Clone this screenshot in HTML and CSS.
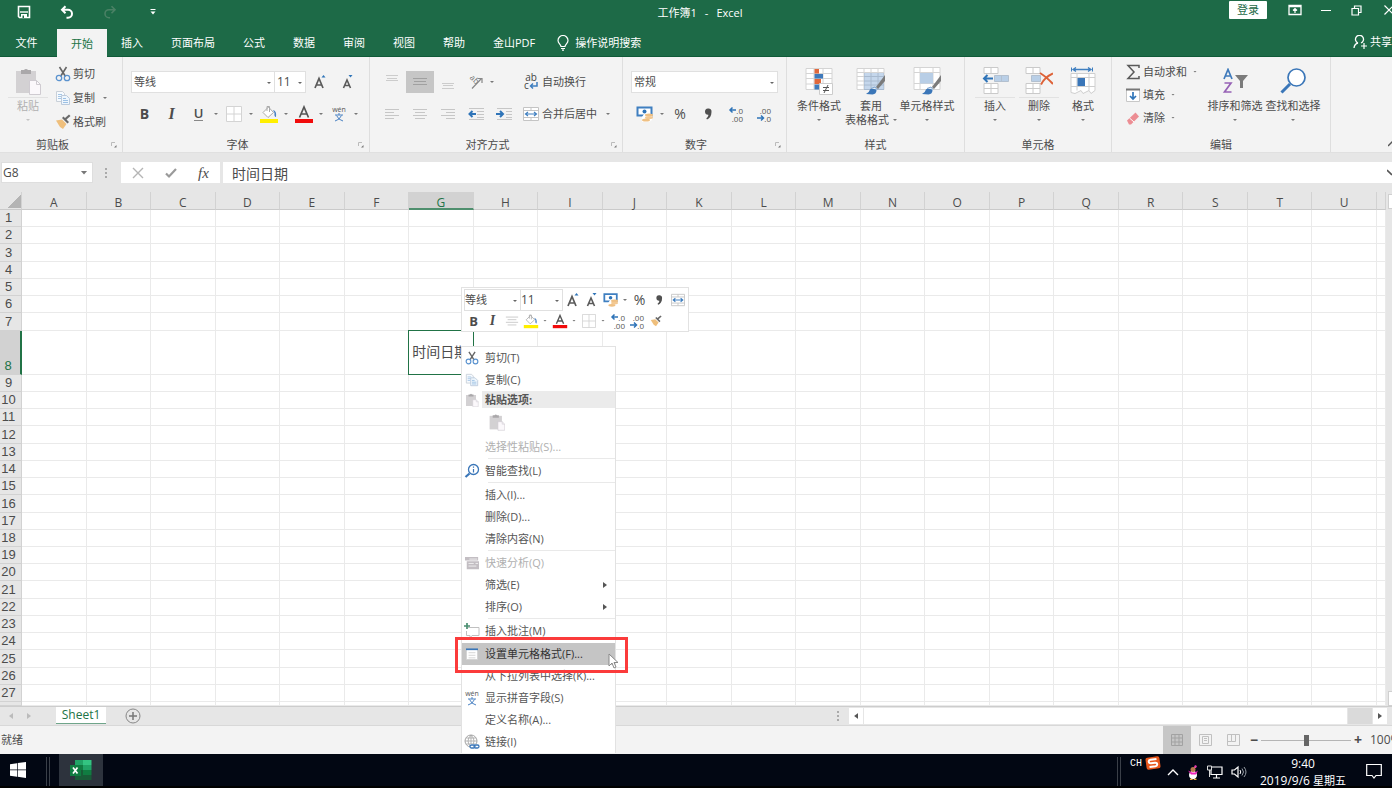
FILE: index.html
```html
<!DOCTYPE html>
<html lang="zh-CN">
<head>
<meta charset="utf-8">
<title>工作簿1 - Excel</title>
<link rel="stylesheet" href="styles.css">
</head>
<body>
<svg class="sprite" aria-hidden="true">
  <symbol id="i-save" viewBox="0 0 14 14"><path d="M1.500 1.500h11v11h-10l-1-1z" fill="none" stroke="#fff" stroke-width="1.600"/><path d="M3 7h8" stroke="#fff" stroke-width="1.400"/><path d="M4 9h6v4H4z" fill="#fff"/><path d="M5.500 10.500h1.500V13H5.500z" fill="#1d6a47"/></symbol>
  <symbol id="i-undo" viewBox="0 0 14 14"><path d="M5.500 1.200L2 4.700l3.500 3.500M2.400 4.700H8a4 4 0 0 1 0 8H6.500" fill="none" stroke="#fff" stroke-width="2"/></symbol>
  <symbol id="i-redo" viewBox="0 0 14 14"><path d="M8.500 1.200L12 4.700 8.500 8.200M11.600 4.700H6a4 4 0 0 0 0 8h1" fill="none" stroke="#4a8165" stroke-width="1.600"/></symbol>
  <symbol id="i-qat" viewBox="0 0 8 8"><path d="M1.500 1.500h5" stroke="#fff"/><path d="M1.500 3.500h5L4 6.500z" fill="#fff"/></symbol>
  <symbol id="i-ribbonopt" viewBox="0 0 14 12"><path d="M1 1.500h12v9H1zM1 2.500h12" fill="none" stroke="#fff" stroke-width="1.300"/><path d="M7 9V5M5 6.500l2-2 2 2" fill="none" stroke="#fff" stroke-width="1.200"/></symbol>
  <symbol id="i-restore" viewBox="0 0 11 11"><path d="M1 3.500h6.500V10H1zM3.500 3V1H10v6.500H8" fill="none" stroke="#fff" stroke-width="1.200"/></symbol>
  <symbol id="i-close" viewBox="0 0 8 10"><path d="M.5.500l9 9M9.500.500l-9 9" stroke="#fff" stroke-width="1.200"/></symbol>
  <symbol id="i-bulb" viewBox="0 0 12 16"><path d="M4 11.500C4 9.500 1 8.500 1 5.500a5 5 0 0 1 10 0C11 8.500 8 9.500 8 11.500zM4 13.500h4M5 15.200h2" fill="none" stroke="#fff" stroke-width="1.200"/></symbol>
  <symbol id="i-share" viewBox="0 0 14 14"><path d="M1 13c.3-3 2-4.500 4-5M8 8a4 4 0 1 0-3 0" fill="none" stroke="#fff" stroke-width="1.300"/><path d="M8 11h6M11 8v6" stroke="#fff" stroke-width="1.200"/></symbol>

  <symbol id="i-paste" viewBox="0 0 26 28"><path d="M1 4h20v22H1z" fill="#d3d1d3"/><path d="M6 3h3a2.500 2.500 0 0 1 4 0h3v4H6z" fill="#aaa8aa"/><path d="M14.500 13.500h7l4 4v10h-11z" fill="#fbf8fb" stroke="#cfcbd1"/><path d="M21.500 13.500v4h4" fill="none" stroke="#cfcbd1"/></symbol>
  <symbol id="i-cut" viewBox="0 0 16 16"><path d="M4.500 1l6 9.500M11.500 1l-6 9.500" stroke="#666" stroke-width="1.600"/><circle cx="4" cy="12" r="2.700" fill="none" stroke="#5b93cf" stroke-width="1.300"/><circle cx="12" cy="12" r="2.700" fill="none" stroke="#5b93cf" stroke-width="1.300"/></symbol>
  <symbol id="i-copy" viewBox="0 0 16 16"><path d="M1.500 1.500h6l2 2v8h-8z" fill="#f6fafe" stroke="#c9d0d8"/><path d="M3 4.500h4M3 6.500h5M3 8.500h3" stroke="#a5c6e6"/><path d="M6.500 5.500h5l3 3v6h-8z" fill="#eef6fd" stroke="#bccadb"/><path d="M8 8.500h3M8 10.500h5M8 12.500h5" stroke="#9cc0e4"/></symbol>
  <symbol id="i-brush" viewBox="0 0 16 16"><path d="M1 6.500l6-1 4.500 4.500L8 15 5 13z" fill="#efbf7c"/><path d="M7 4l5.500 5.500 1.500-1.500-2.500-2.500L15.500 2 14 .5 10 4 8.500 2.500z" fill="#6a6a6a"/></symbol>
  <symbol id="i-border" viewBox="0 0 16 16"><path d="M.5.500h15v15H.5zM8 .5v15M.5 8h15" fill="#fff" stroke="#d4d4d4"/></symbol>
  <symbol id="i-fill" viewBox="0 0 20 18"><path d="M4 7.500L9.500 2l5 5.500L9 12.500z" fill="#fff" stroke="#aaa"/><path d="M8 6V1.500h2.500V7" fill="none" stroke="#aaa"/><path d="M14 5q4 1 3 7-2 0-1.500-4z" fill="#4a82c3"/><path d="M1 14h18v4H1z" fill="#ffef00"/></symbol>
  <symbol id="i-fcolor" viewBox="0 0 20 18"><path d="M5.500 12.500L10 2l4.500 10.500M7 9h6" fill="none" stroke="#555" stroke-width="1.700"/><path d="M1 14h18v4H1z" fill="#f10b0b"/></symbol>
  <symbol id="i-wen" viewBox="0 0 16 16"><text x="8" y="6" class="g-wen">wén</text><path d="M4 9h8M8 7v2M5.500 9.500Q7.500 14 12 15M10.500 9.500Q8.500 14 4 15" stroke="#4a82c3" fill="none"/></symbol>
  <symbol id="i-grow" viewBox="0 0 16 16"><path d="M3 14L7 4.500 11 14M4.500 11h5" fill="none" stroke="#5a5a5a" stroke-width="1.700"/><path d="M9.500 3.500h4L11.500 1z" fill="#2f74b8"/></symbol>
  <symbol id="i-shrink" viewBox="0 0 16 16"><path d="M3.500 14L7 6l3.500 8M5 11.500h4" fill="none" stroke="#5a5a5a" stroke-width="1.600"/><path d="M8.500 1h4l-2 2.500z" fill="#2f74b8"/></symbol>
  <symbol id="i-top" viewBox="0 0 16 16"><path d="M2 1.500h12M3 4.500h10M2 6.500h12" stroke="#ccc"/></symbol>
  <symbol id="i-mid" viewBox="0 0 16 16"><path d="M1 4.500h14M2 7.500h12M1 10.500h14" stroke="#a0a0a0"/></symbol>
  <symbol id="i-bot" viewBox="0 0 16 16"><path d="M2 9.500h12M3 11.500h10M2 14.500h12" stroke="#ccc"/></symbol>
  <symbol id="i-left" viewBox="0 0 16 16"><path d="M1 3.500h14M1 6.500h9M1 9.500h14M1 12.500h9" stroke="#c6c6c6"/></symbol>
  <symbol id="i-center" viewBox="0 0 16 16"><path d="M1 3.500h14M3 6.500h10M1 9.500h14M3 12.500h10" stroke="#c6c6c6"/></symbol>
  <symbol id="i-right" viewBox="0 0 16 16"><path d="M1 3.500h14M6 6.500h9M1 9.500h14M6 12.500h9" stroke="#c6c6c6"/></symbol>
  <symbol id="i-outdent" viewBox="0 0 16 16"><path d="M1 2.500h15M9 5.500h7M9 8.500h7M9 11.500h7M1 13.500h15" stroke="#c6c6c6"/><path d="M8 8H2M4.500 5L1.500 8l3 3" fill="none" stroke="#2f74b8" stroke-width="2"/></symbol>
  <symbol id="i-indent" viewBox="0 0 16 16"><path d="M1 2.500h15M10 5.500h6M10 8.500h6M10 11.500h6M1 13.500h15" stroke="#c6c6c6"/><path d="M0 8h6M4 5l3 3-3 3" fill="none" stroke="#2f74b8" stroke-width="2"/></symbol>
  <symbol id="i-orient" viewBox="0 0 16 16"><path d="M4 14.500L13 5M9.500 4.500H14V9" fill="none" stroke="#888" stroke-width="1.200"/><g transform="rotate(45 6 6)"><text x="6" y="8" class="g-ab">ab</text></g></symbol>
  <symbol id="i-wrap" viewBox="0 0 16 18"><text x="8" y="8" class="g-wrap">ab</text><text x="3.500" y="16" class="g-wrap">c</text><path d="M14 9v4H8M10 10.500L7.500 13l2.500 2.500" fill="none" stroke="#3f7fc0" stroke-width="1.500"/></symbol>
  <symbol id="i-merge" viewBox="0 0 16 16"><path d="M.5 1.500h15v13H.5zM.5 4.500h15M.5 11.500h15M8 1.500v3M8 11.500v3" fill="#fff" stroke="#c4c4c4"/><path d="M2.500 8h11M5 6L2.500 8 5 10M11 6l2.500 2L11 10" fill="none" stroke="#3f7fc0" stroke-width="1.200"/></symbol>
  <symbol id="i-money" viewBox="0 0 18 16"><path d="M1.500 1.500h14v8h-14z" fill="#fff" stroke="#3f7fc0" stroke-width="2"/><circle cx="8.500" cy="5.500" r="2" fill="#2f74b8"/><path d="M8 8h8v6l-3 2H6v-5z" fill="#fff"/><ellipse cx="13" cy="9" rx="4" ry="1.500" fill="#efc083"/><ellipse cx="13" cy="11.500" rx="4" ry="1.500" fill="#f3c993"/><ellipse cx="10" cy="14" rx="4" ry="1.600" fill="#efc083"/></symbol>
  <symbol id="i-comma" viewBox="0 0 16 16"><path d="M8 2.500a3 3 0 0 1 3.500 3.500c0 4-2 6.500-4.500 7.500l-.7-1.200c1.500-1 2.200-2.300 2-3.500A3.100 3.100 0 0 1 8 2.500z" fill="#505050"/></symbol>
  <symbol id="i-decinc" viewBox="0 0 16 16"><text x="15" y="7.500" class="g-dec">.0</text><text x="15" y="15.500" class="g-dec">.00</text><path d="M8 4H2M4.500 1.500L2 4l2.500 2.500" fill="none" stroke="#2f74b8" stroke-width="1.500"/></symbol>
  <symbol id="i-decdec" viewBox="0 0 16 16"><text x="15" y="7.500" class="g-dec">.00</text><text x="15" y="15.500" class="g-dec">.0</text><path d="M1 12h6M5 9.500L7.500 12 5 14.500" fill="none" stroke="#2f74b8" stroke-width="1.500"/></symbol>
  <symbol id="i-cond" viewBox="0 0 28 28"><path d="M1 1.500h26v21H1zM1 6.500h26M1 11.500h26M1 17h26M9 1.500v21M18 1.500v21" fill="#fff" stroke="#d4d4d4"/><path d="M9.500 2H14v4.500H9.500zM9.500 12H16v5H9.500z" fill="#e0683c"/><path d="M9.500 7H18v4.500H9.500zM9.500 17.500H14v5H9.500z" fill="#3f7abb"/><path d="M14.500 16.500h13v11h-13z" fill="#fff" stroke="#ccc"/><path d="M18 20.500h6M18 23.500h6M23 18l-4 8" stroke="#555"/></symbol>
  <symbol id="i-tstyle" viewBox="0 0 30 28"><path d="M1 1.500h27v21H1zM1 5.500h27M1 9.500h27M1 14h27M1 18h27M8 1.500v21M15 1.500v21M22 1.500v21" fill="#fff" stroke="#d4d4d4"/><path d="M8 6h20v17H8z" fill="#4a82c3" opacity=".32"/><path d="M20 20L29 8v6l-7 8z" fill="#7b7b7b"/><path d="M10 27q3-1 4-4.500 4-3 6.500.500 0 4-4 4.500z" fill="#3a76b8"/><path d="M15 21.500l4-1.500 2 2.500" fill="#e7eef6" stroke="#7fa5cf"/></symbol>
  <symbol id="i-cstyle" viewBox="0 0 30 28"><path d="M2 .5h26v22H2zM2 5.500h26M2 16.500h26M8 .5v22M21 .5v22" fill="#fff" stroke="#d4d4d4"/><path d="M8 6h13v10.500H8z" fill="#b8cee6"/><path d="M20 20L29 8v6l-7 8z" fill="#7b7b7b"/><path d="M10 27q3-1 4-4.500 4-3 6.500.500 0 4-4 4.500z" fill="#3a76b8"/><path d="M15 21.500l4-1.500 2 2.500" fill="#e7eef6" stroke="#7fa5cf"/></symbol>
  <symbol id="i-insert" viewBox="0 0 28 28"><path d="M3 .5h14v6H3zM10 .5v6M3 16.500h14v10H3zM3 21.500h14M10 16.500v10" fill="#fff" stroke="#cacaca"/><path d="M13.500 8.500h14v6h-14zM20.500 8.500v6" fill="#b9cfe7" stroke="#b3c0cf"/><path d="M12 11.500H3M6.500 8L3 11.500 6.500 15" fill="none" stroke="#2f74b8" stroke-width="2"/></symbol>
  <symbol id="i-delete" viewBox="0 0 28 28"><path d="M1 .5h14v6H1zM8 .5v6M1 16.500h14v10H1zM1 21.500h14M8 16.500v10" fill="#fff" stroke="#cacaca"/><path d="M6.500 8.500h9v6h-9z" fill="#b9cfe7" stroke="#b3c0cf"/><path d="M15 6q6 3.500 13 11M28 6.500Q20 10 16 17.500" fill="none" stroke="#dd6238" stroke-width="2"/></symbol>
  <symbol id="i-format" viewBox="0 0 26 28"><path d="M3 2.500h18M6 .5L3 2.500l3 2M18 .5l3 2-3 2" fill="none" stroke="#3f7fc0" stroke-width="1.300"/><path d="M1.500.5v4M22.500.5v4" stroke="#3f7fc0"/><path d="M1 6.500h24v17l-4 3-2-3-6 3-2-3-6 3-4-1zM1 10.500h24M1 19.500h24M7 6.500v17M19 6.500v17" fill="#fff" stroke="#cfcfcf"/><path d="M7.500 11H15v8H7.500z" fill="#3a76b8"/></symbol>
  <symbol id="i-sum" viewBox="0 0 14 16"><path d="M13 4V1.500H2L8 8l-6 6.500h11V12" fill="none" stroke="#5a5a5a" stroke-width="1.500"/></symbol>
  <symbol id="i-down" viewBox="0 0 14 14"><path d="M.5 1.500h13v12H.5z" fill="#fff" stroke="#c8c8c8"/><path d="M0 1.500h14" stroke="#777" stroke-width="2"/><path d="M7 4v7M4 8l3 3 3-3" fill="none" stroke="#2f74b8" stroke-width="1.700"/></symbol>
  <symbol id="i-erase" viewBox="0 0 14 14"><path d="M1 9.500L9.500 1.500l3.500 4L5 13.500H3z" fill="#ec8d93"/><path d="M3.500 7l4.500 4" stroke="#fff"/></symbol>
  <symbol id="i-sort" viewBox="0 0 26 26"><path d="M2 11L6 1.500 10 11M3.500 8h5" fill="none" stroke="#3f7abb" stroke-width="1.700"/><path d="M2.500 15h6.500L2.500 24H9.500" fill="none" stroke="#9661b5" stroke-width="1.700"/><path d="M13 7h13l-5 6v7h-3v-7z" fill="#7b7b7b"/></symbol>
  <symbol id="i-find" viewBox="0 0 26 26"><path d="M10 16L1.500 24.500" stroke="#3a76b8" stroke-width="3"/><circle cx="16.500" cy="9.500" r="8.500" fill="#fff" stroke="#3a76b8" stroke-width="1.700"/></symbol>
  <symbol id="i-smart" viewBox="0 0 16 16"><path d="M5.500 10.500L1.500 14" stroke="#3a76b8" stroke-width="2.200"/><circle cx="9.500" cy="6.500" r="5" fill="#fff" stroke="#3a76b8" stroke-width="1.300"/><path d="M9.500 6v3.500M9.500 3.500v1.300" stroke="#3a76b8" stroke-width="1.200"/></symbol>
  <symbol id="i-quick" viewBox="0 0 16 16"><path d="M0 1h15v4H0zM2 6h14v9H2z" fill="#c3bec3"/><path d="M5 3.500h9M4 8.500h6M12 8.500h3M4 11.500h9" stroke="#f4f4f4"/></symbol>
  <symbol id="i-note" viewBox="0 0 16 16"><path d="M4 4.500h11v8H8L6 15v-2.500H2.500V8" fill="#fff" stroke="#c0c0c0"/><path d="M3 0v6M0 3h6" stroke="#4a8f70" stroke-width="1.700"/></symbol>
  <symbol id="i-dialog" viewBox="0 0 14 14"><path d="M.5 1.500h13v12H.5z" fill="#fff" stroke="#d0d0d0"/><path d="M0 1.500h14" stroke="#3a76b8" stroke-width="2"/><path d="M3 5.500h8M3 8.500h8M3 11.500h8" stroke="#d0d0d0"/></symbol>
  <symbol id="i-link" viewBox="0 0 16 16"><circle cx="7" cy="7" r="6" fill="#fff" stroke="#a5a5a5"/><path d="M1 7h12M7 1v12M2 4h10M2 10h10M7 1Q1 7 7 13M7 1q6 6 0 12" fill="none" stroke="#a5a5a5" stroke-width=".8"/><path d="M6 10h9v5H6z" fill="#fff"/><rect x="6" y="11" width="5" height="3" rx="1.500" fill="none" stroke="#3a76b8" stroke-width="1.300"/><rect x="10" y="11" width="5" height="3" rx="1.500" fill="none" stroke="#3a76b8" stroke-width="1.300"/></symbol>
  <symbol id="i-launch" viewBox="0 0 8 8"><path d="M1.500 5V1.500H5" fill="none" stroke="#bbb"/><path d="M6.500 4v2.500H4z" fill="#777"/></symbol>
  <symbol id="i-x" viewBox="0 0 12 12"><path d="M1 1l10 10M11 1L1 11" stroke="#b5b5b5" stroke-width="1.400"/></symbol>
  <symbol id="i-check" viewBox="0 0 12 12"><path d="M1 6.500l3 3L11 2" fill="none" stroke="#9a9a9a" stroke-width="2.200"/></symbol>
  <symbol id="i-plus" viewBox="0 0 16 16"><circle cx="8" cy="8" r="7" fill="none" stroke="#888"/><path d="M4 8h8M8 4v8" stroke="#777" stroke-width="1.500"/></symbol>
  <symbol id="i-vnormal" viewBox="0 0 12 12"><path d="M.5.500h11v11H.5zM.5 4h11M.5 8h11M4 .5v11M8 .5v11" fill="none" stroke="#a2a2a2"/></symbol>
  <symbol id="i-vpage" viewBox="0 0 13 12"><path d="M.5.500h12v11H.5zM3.500 2.500h6v7h-6zM5 4.500h3M5 6.500h3" fill="none" stroke="#c0c0c0"/></symbol>
  <symbol id="i-vbreak" viewBox="0 0 13 12"><path d="M.5.500h12v11H.5zM4.500.500v7H.5M8.500.500v7H4.500" fill="none" stroke="#c0c0c0"/></symbol>
  <symbol id="i-win" viewBox="0 0 16 16"><path d="M0 2.300L7 1.200v6.400H0zM7.700 1.100L16 0v7.600H7.700zM0 8.300h7v6.400l-7-1zM7.700 8.300H16V16l-8.300-1.200z" fill="#fff"/></symbol>
  <symbol id="i-excel" viewBox="0 0 22 20"><path d="M5 0h8v5H5z" fill="#21a366"/><path d="M13 0h8.500v5H13z" fill="#33c481"/><path d="M5 5h8v5H5z" fill="#107c41"/><path d="M13 5h8.500v5H13z" fill="#21a366"/><path d="M5 10h8v5H5z" fill="#185c37"/><path d="M13 10h8.500v5H13z" fill="#107c41"/><path d="M5 15h16.500v5H5z" fill="#185c37"/><path d="M0 5h11v11H0z" fill="#107c41"/><path d="M3 7.500l4.500 6M7.500 7.500L3 13.500" stroke="#fff" stroke-width="1.700"/></symbol>
  <symbol id="i-sogou" viewBox="0 0 16 16"><g transform="rotate(-8 8 8)"><rect x="1" y="2" width="14" height="12" rx="2" fill="#e8571c"/><path d="M12 4.500H6q-2 0-2 1.700T6 8h4q2 0 2 1.700t-2 1.800H4" fill="none" stroke="#fff" stroke-width="2"/></g></symbol>
  <symbol id="i-qq" viewBox="0 0 12 16"><path d="M6.500 4L8 1l2 1-1 2z" fill="#e83cae"/><ellipse cx="6" cy="11" rx="4" ry="4.300" fill="#fff"/><circle cx="6" cy="5.500" r="2.500" fill="#b7794b"/><path d="M1 6.500l4 2h3l3-2-2 4H4z" fill="#f224b8"/><path d="M3 15.300h2.500M7 15.300h2.500" stroke="#f0a73a" stroke-width="1.200"/></symbol>
  <symbol id="i-net" viewBox="0 0 16 14"><path d="M5 2h10v7.500H4V5M9.500 10v3M6 13h7" fill="none" stroke="#fff" stroke-width="1.200"/><path d="M.5 1h4v4h-4zM2.500 5v7" fill="none" stroke="#ddd"/></symbol>
  <symbol id="i-vol" viewBox="0 0 16 14"><path d="M1 5h2.500L7 2v10L3.500 9H1z" fill="none" stroke="#fff" stroke-width="1.200"/><path d="M9 5q1.500 2 0 4" fill="none" stroke="#fff"/><path d="M11 3.500q3 3.500 0 7M13 2q4 5 0 10" fill="none" stroke="#9aa0a8"/></symbol>
  <symbol id="i-notify" viewBox="0 0 16 16"><path d="M.7 1.500h14.600v11H10L8 15l-2-2.500H.7z" fill="none" stroke="#fff" stroke-width="1.200"/></symbol>
  <symbol id="i-chev" viewBox="0 0 12 8"><path d="M1 7l5-5 5 5" fill="none" stroke="#fff" stroke-width="1.400"/></symbol>
</svg>

<div class="app">
  <header class="titlebar">
    <div class="qat">
      <button aria-label="保存"><svg class="s14"><use href="#i-save"/></svg></button>
      <button aria-label="撤消"><svg class="s14"><use href="#i-undo"/></svg></button>
      <button aria-label="恢复"><svg class="s14"><use href="#i-redo"/></svg></button>
      <button aria-label="自定义快速访问工具栏"><svg class="s8"><use href="#i-qat"/></svg></button>
    </div>
    <h1 class="title"><span>工作簿1</span><span>-</span><span>Excel</span></h1>
    <div class="winctl">
      <button class="login">登录</button>
      <button aria-label="功能区显示选项"><svg width="14" height="12"><use href="#i-ribbonopt"/></svg></button>
      <button aria-label="最小化"><span class="minline"></span></button>
      <button aria-label="还原"><svg width="11" height="11"><use href="#i-restore"/></svg></button>
      <button class="edge" aria-label="关闭"><svg width="8" height="10"><use href="#i-close"/></svg></button>
    </div>
  </header>

  <nav class="tabs">
    <button class="file">文件</button>
    <button class="on">开始</button>
    <button>插入</button>
    <button>页面布局</button>
    <button>公式</button>
    <button>数据</button>
    <button>审阅</button>
    <button>视图</button>
    <button>帮助</button>
    <button>金山PDF</button>
    <button class="tell"><svg width="12" height="16"><use href="#i-bulb"/></svg>操作说明搜索</button>
    <button class="share"><svg class="s14"><use href="#i-share"/></svg>共享</button>
  </nav>

  <section class="ribbon">
    <div class="group g-clip">
      <div class="gbody cols">
        <button class="big off"><span class="bigic"><svg width="26" height="28"><use href="#i-paste"/></svg></span><span class="cap line">粘贴</span><i class="ar"></i></button>
        <div class="stack clipstack">
          <button class="lbl"><svg class="s16"><use href="#i-cut"/></svg>剪切</button>
          <button class="lbl"><svg class="s16"><use href="#i-copy"/></svg>复制<i class="ar"></i></button>
          <button class="lbl"><svg class="s16"><use href="#i-brush"/></svg>格式刷</button>
        </div>
      </div>
      <div class="glabel"><span>剪贴板</span><button aria-label="剪贴板设置"><svg class="s8"><use href="#i-launch"/></svg></button></div>
    </div>

    <div class="group g-font">
      <div class="gbody rows">
        <div class="row">
          <span class="combo w-font"><select aria-label="字体"><option>等线</option></select></span>
          <span class="combo w-size"><select aria-label="字号"><option>11</option></select></span>
          <button class="ib" aria-label="增大字号"><svg class="s16"><use href="#i-grow"/></svg></button>
          <button class="ib" aria-label="减小字号"><svg class="s16"><use href="#i-shrink"/></svg></button>
        </div>
        <div class="row">
          <button class="sb bold">B</button>
          <button class="sb ital">I</button>
          <button class="sb under"><span>U</span></button><i class="ar sp"></i>
          <button class="sb" aria-label="边框"><svg class="s16"><use href="#i-border"/></svg></button><i class="ar sp"></i>
          <button class="sb" aria-label="填充颜色"><svg width="20" height="18"><use href="#i-fill"/></svg></button><i class="ar sp"></i>
          <button class="sb" aria-label="字体颜色"><svg width="20" height="18"><use href="#i-fcolor"/></svg></button><i class="ar sp"></i>
          <button class="sb" aria-label="拼音"><svg class="s16"><use href="#i-wen"/></svg></button><i class="ar sp"></i>
        </div>
      </div>
      <div class="glabel"><span>字体</span><button aria-label="字体设置"><svg class="s8"><use href="#i-launch"/></svg></button></div>
    </div>

    <div class="group g-align">
      <div class="gbody rows">
        <div class="row">
          <button class="ib" aria-label="顶端对齐"><svg class="s16"><use href="#i-top"/></svg></button>
          <button class="ib on" aria-label="垂直居中"><svg class="s16"><use href="#i-mid"/></svg></button>
          <button class="ib" aria-label="底端对齐"><svg class="s16"><use href="#i-bot"/></svg></button>
          <button class="ib" aria-label="方向"><svg class="s16"><use href="#i-orient"/></svg></button><i class="ar"></i>
          <button class="lbl tail"><svg width="16" height="18"><use href="#i-wrap"/></svg>自动换行</button>
        </div>
        <div class="row">
          <button class="ib" aria-label="左对齐"><svg class="s16"><use href="#i-left"/></svg></button>
          <button class="ib" aria-label="居中"><svg class="s16"><use href="#i-center"/></svg></button>
          <button class="ib" aria-label="右对齐"><svg class="s16"><use href="#i-right"/></svg></button>
          <button class="ib" aria-label="减少缩进量"><svg class="s16"><use href="#i-outdent"/></svg></button>
          <button class="ib" aria-label="增加缩进量"><svg class="s16"><use href="#i-indent"/></svg></button>
          <button class="lbl tail"><svg class="s16"><use href="#i-merge"/></svg>合并后居中<i class="ar"></i></button>
        </div>
      </div>
      <div class="glabel"><span>对齐方式</span><button aria-label="对齐设置"><svg class="s8"><use href="#i-launch"/></svg></button></div>
    </div>

    <div class="group g-num">
      <div class="gbody rows">
        <div class="row"><span class="combo w-num"><select aria-label="数字格式"><option>常规</option></select></span></div>
        <div class="row">
          <button class="sb" aria-label="会计数字格式"><svg width="18" height="16"><use href="#i-money"/></svg></button><i class="ar sp"></i>
          <button class="ib pct">%</button>
          <button class="ib" aria-label="千位分隔样式"><svg class="s16"><use href="#i-comma"/></svg></button>
          <button class="ib" aria-label="增加小数位数"><svg class="s16"><use href="#i-decinc"/></svg></button>
          <button class="ib" aria-label="减少小数位数"><svg class="s16"><use href="#i-decdec"/></svg></button>
        </div>
      </div>
      <div class="glabel"><span>数字</span><button aria-label="数字设置"><svg class="s8"><use href="#i-launch"/></svg></button></div>
    </div>

    <div class="group g-style">
      <div class="gbody cols">
        <button class="big"><span class="bigic"><svg width="28" height="28"><use href="#i-cond"/></svg></span><span class="cap">条件格式</span><i class="ar"></i></button>
        <button class="big"><span class="bigic"><svg width="30" height="28"><use href="#i-tstyle"/></svg></span><span class="cap">套用</span><span class="cap two">表格格式<i class="ar"></i></span></button>
        <button class="big wide"><span class="bigic"><svg width="30" height="28"><use href="#i-cstyle"/></svg></span><span class="cap">单元格样式</span><i class="ar"></i></button>
      </div>
      <div class="glabel"><span>样式</span></div>
    </div>

    <div class="group g-cell">
      <div class="gbody cols">
        <button class="big"><span class="bigic"><svg width="28" height="28"><use href="#i-insert"/></svg></span><span class="cap line">插入</span><i class="ar"></i></button>
        <button class="big"><span class="bigic"><svg width="28" height="28"><use href="#i-delete"/></svg></span><span class="cap line">删除</span><i class="ar"></i></button>
        <button class="big"><span class="bigic"><svg width="26" height="28"><use href="#i-format"/></svg></span><span class="cap">格式</span><i class="ar"></i></button>
      </div>
      <div class="glabel"><span>单元格</span></div>
    </div>

    <div class="group g-edit">
      <div class="gbody cols">
        <div class="stack editstack">
          <button class="lbl"><svg width="14" height="16"><use href="#i-sum"/></svg>自动求和<i class="ar"></i></button>
          <button class="lbl"><svg class="s14"><use href="#i-down"/></svg>填充<i class="ar"></i></button>
          <button class="lbl"><svg class="s14"><use href="#i-erase"/></svg>清除<i class="ar"></i></button>
        </div>
        <button class="big"><span class="bigic"><svg width="26" height="26"><use href="#i-sort"/></svg></span><span class="cap">排序和筛选</span><i class="ar"></i></button>
        <button class="big"><span class="bigic"><svg width="26" height="26"><use href="#i-find"/></svg></span><span class="cap">查找和选择</span><i class="ar"></i></button>
      </div>
      <div class="glabel"><span>编辑</span></div>
    </div>
    <button class="collapse" aria-label="折叠功能区"><svg width="4" height="8" viewBox="0 0 4 8"><path d="M0 6l5-5" stroke="#555" stroke-width="1.400"/></svg></button>
  </section>

  <section class="fbar">
    <div class="namebox"><input aria-label="名称框" value="G8"><button aria-label="名称列表"><i class="ar lg"></i></button></div>
    <span class="grip"></span>
    <div class="fctl">
      <button aria-label="取消"><svg class="s12"><use href="#i-x"/></svg></button>
      <button aria-label="输入"><svg class="s12"><use href="#i-check"/></svg></button>
      <button class="fx">fx</button>
    </div>
    <div class="formula"><input aria-label="编辑栏" value="时间日期"><button aria-label="展开编辑栏"><svg width="5" height="8" viewBox="0 0 5 8"><path d="M0 1l5 5" stroke="#555" stroke-width="1.600"/></svg></button></div>
  </section>

  <main class="sheet">
    <table class="grid" id="grid" aria-label="Sheet1"></table>
    <div class="vscroll"><span class="up"></span><span class="down"></span></div>
  </main>

  <footer class="sheetbar">
    <button class="nav" aria-label="上一个"><i class="tri l"></i></button>
    <button class="nav" aria-label="下一个"><i class="tri r"></i></button>
    <button class="stab">Sheet1</button>
    <button class="add" aria-label="新工作表"><svg class="s16"><use href="#i-plus"/></svg></button>
    <span class="grip"></span>
    <div class="hscroll">
      <button aria-label="向左"><i class="tri l dark"></i></button>
      <span class="thumb"></span><span class="track"></span>
      <button aria-label="向右"><i class="tri r dark"></i></button>
    </div>
  </footer>

  <footer class="status">
    <span class="ready">就绪</span>
    <button class="view on" aria-label="普通"><svg class="s12"><use href="#i-vnormal"/></svg></button>
    <button class="view" aria-label="页面布局视图"><svg width="13" height="12"><use href="#i-vpage"/></svg></button>
    <button class="view" aria-label="分页预览"><svg width="13" height="12"><use href="#i-vbreak"/></svg></button>
    <button class="zm" aria-label="缩小">−</button>
    <input class="zoom" type="range" aria-label="缩放" min="0" max="100" value="50">
    <button class="zm" aria-label="放大">+</button>
    <span class="pctv">100%</span>
  </footer>

  <footer class="taskbar">
    <button class="start" aria-label="开始菜单"><svg class="s16"><use href="#i-win"/></svg></button>
    <span class="bars"></span>
    <button class="task" aria-label="Excel"><svg width="22" height="20"><use href="#i-excel"/></svg></button>
    <span class="bars push"></span>
    <div class="ime"><span>CH</span><svg class="s16"><use href="#i-sogou"/></svg></div>
    <div class="tray">
      <svg width="12" height="8"><use href="#i-chev"/></svg>
      <svg width="12" height="16"><use href="#i-qq"/></svg>
      <svg width="16" height="14"><use href="#i-net"/></svg>
      <svg width="16" height="14"><use href="#i-vol"/></svg>
    </div>
    <div class="clock"><span>9:40</span><span>2019/9/6 <small>星期五</small></span></div>
    <button class="notify" aria-label="通知"><svg class="s16"><use href="#i-notify"/></svg></button>
  </footer>

  <div class="mini">
    <div class="mrow">
      <span class="combo m-font"><select aria-label="字体"><option>等线</option></select></span>
      <span class="combo m-size"><select aria-label="字号"><option>11</option></select></span>
      <button aria-label="增大字号"><svg class="s16"><use href="#i-grow"/></svg></button>
      <button aria-label="减小字号"><svg class="s16"><use href="#i-shrink"/></svg></button>
      <button aria-label="会计数字格式"><svg class="s16"><use href="#i-money"/></svg></button><i class="ar mp"></i>
      <button class="pct">%</button>
      <button aria-label="千位分隔样式"><svg class="s14"><use href="#i-comma"/></svg></button>
      <button aria-label="合并后居中"><svg class="s14"><use href="#i-merge"/></svg></button>
    </div>
    <div class="mrow">
      <button class="bold">B</button>
      <button class="ital">I</button>
      <button aria-label="居中"><svg class="s14"><use href="#i-center"/></svg></button>
      <button aria-label="填充颜色"><svg class="s16"><use href="#i-fill"/></svg></button><i class="ar mp"></i>
      <button aria-label="字体颜色"><svg class="s16"><use href="#i-fcolor"/></svg></button><i class="ar mp"></i>
      <button aria-label="边框"><svg class="s14"><use href="#i-border"/></svg></button><i class="ar mp"></i>
      <button aria-label="增加小数位数"><svg class="s16"><use href="#i-decinc"/></svg></button>
      <button aria-label="减少小数位数"><svg class="s16"><use href="#i-decdec"/></svg></button>
      <button aria-label="格式刷"><svg class="s12"><use href="#i-brush"/></svg></button>
    </div>
  </div>

  <div class="menu" role="menu">
    <button><span class="mi"><svg class="s14"><use href="#i-cut"/></svg></span>剪切(T)</button>
    <button><span class="mi"><svg class="s14"><use href="#i-copy"/></svg></span>复制(C)</button>
    <div class="head"><span class="mi"><svg class="s14"><use href="#i-paste"/></svg></span><b>粘贴选项:</b></div>
    <button class="pastebtn" aria-label="粘贴"><svg width="16" height="18"><use href="#i-paste"/></svg></button>
    <button class="off"><span class="mi"></span>选择性粘贴(S)...</button>
    <hr>
    <button><span class="mi"><svg class="s16"><use href="#i-smart"/></svg></span>智能查找(L)</button>
    <hr>
    <button><span class="mi"></span>插入(I)...</button>
    <button><span class="mi"></span>删除(D)...</button>
    <button><span class="mi"></span>清除内容(N)</button>
    <hr>
    <button class="off"><span class="mi"><svg class="s14"><use href="#i-quick"/></svg></span>快速分析(Q)</button>
    <button class="sub"><span class="mi"></span>筛选(E)<i class="tri r dark"></i></button>
    <button class="sub"><span class="mi"></span>排序(O)<i class="tri r dark"></i></button>
    <hr>
    <button><span class="mi"><svg class="s16"><use href="#i-note"/></svg></span>插入批注(M)</button>
    <button class="hot"><span class="mi"><svg class="s12"><use href="#i-dialog"/></svg></span>设置单元格格式(F)...
      <span class="mark"></span>
      <svg class="cursor" width="11" height="16" viewBox="0 0 11 16"><path d="M1 1v12l3-3 2 5 2-1-2-4.500h4z" fill="#fff" stroke="#888"/></svg>
    </button>
    <button><span class="mi"></span>从下拉列表中选择(K)...</button>
    <button><span class="mi"><svg class="s16"><use href="#i-wen"/></svg></span>显示拼音字段(S)</button>
    <button><span class="mi"></span>定义名称(A)...</button>
    <button><span class="mi"><svg class="s16"><use href="#i-link"/></svg></span>链接(I)</button>
  </div>
</div>
<script src="script.js"></script>
</body>
</html>
```

FILE: styles.css
```css
* { box-sizing: border-box; }
html, body { height: 100%; }
body {
  margin: 0;
  overflow: hidden;
  color: #4c4c4c;
  font-family: "Open Sans", "Noto Sans CJK SC", sans-serif;
  font-size: 11px;
  line-height: 14px;
  background: #e6e6e6;
}
button, input, select { font: inherit; color: inherit; border: 0; margin: 0; padding: 0; background: none; }
button { display: flex; align-items: center; justify-content: center; white-space: nowrap; }
svg { display: block; flex: none; }
.sprite { display: none; }
.s8 { width: 8px; height: 8px; }
.s12 { width: 12px; height: 12px; }
.s14 { width: 14px; height: 14px; }
.s16 { width: 16px; height: 16px; }
.g-wen { font-size: 7px; fill: #555; text-anchor: middle; }
.g-ab { font-size: 8px; fill: #777; text-anchor: middle; }
.g-wrap { font-size: 10px; fill: #444; text-anchor: middle; }
.g-dec { font-size: 8px; fill: #555; text-anchor: end; }

.app { position: relative; display: flex; flex-direction: column; height: 100%; overflow: hidden; }

/* small drop-down arrow */
.ar { width: 4px; height: 2px; flex: none; background: #777; clip-path: polygon(0 0, 100% 0, 50% 100%); }
.ar.lg { width: 7px; height: 4px; }
.ar.sp { margin: 0 2px; }
.ar.mp { margin: 0 3px; }
.tri { width: 4px; height: 6px; background: #bbb; }
.tri.l { clip-path: polygon(100% 0, 100% 100%, 0 50%); }
.tri.r { clip-path: polygon(0 0, 100% 50%, 0 100%); }
.tri.dark { background: #555; }

/* title bar */
.titlebar { display: grid; grid-template-columns: 1fr auto 1fr; height: 28px; background: #1d6a47; color: #fff; }
.qat { display: flex; padding-left: 2px; height: 24px; }
.qat button { width: 43px; }
.title { display: flex; gap: 8px; margin: 0; padding-left: 8px; font-size: 11px; font-weight: 400; line-height: 26px; }
.winctl { display: flex; justify-content: flex-end; height: 20px; }
.winctl button { width: 31px; }
.winctl .login { width: 38px; height: 18px; margin: 1px 12px 0 0; background: #fff; color: #1d6a47; border-radius: 1px; }
.winctl .edge { width: 20px; justify-content: flex-end; }
.minline { width: 10px; height: 1px; background: #fff; }

/* ribbon tabs */
.tabs { display: flex; height: 29px; background: #1d6a47; color: #fff; border-bottom: 1px solid #0f5a38; }
.tabs button { padding: 2px 14px 0; height: 28px; }
.tabs .file { width: 57px; padding-right: 18px; }
.tabs .on { background: #f3f3f3; color: #217346; height: 29px; margin-top: 1px; padding-top: 0; }
.tabs .tell { padding: 2px 8px 0; gap: 6px; }
.tabs .share { margin-left: auto; padding: 0; gap: 3px; }

/* ribbon */
.ribbon { display: flex; height: 96px; background: #f3f3f3; border-bottom: 1px solid #e0e0e0; }
.group { display: flex; flex-direction: column; flex: none; border-right: 1px solid #dedede; }
.gbody { flex: 1; padding-left: 8px; }
.rows { padding-top: 9px; }
.row { display: flex; align-items: center; height: 32px; }
.cols { display: flex; }
.glabel { display: flex; align-items: center; height: 14px; }
.glabel span { flex: 1; text-align: center; }
.glabel button { width: 17px; height: 14px; }
.g-clip { width: 123px; }
.g-font { width: 247px; }
.g-align { width: 253px; }
.g-num { width: 164px; }
.g-style { width: 178px; }
.g-cell { width: 147px; }
.g-edit { width: 219px; }

.combo { position: relative; display: flex; height: 22px; background: #fff; border: 1px solid #e0e0e0; }
.combo select { width: 100%; padding-left: 2px; appearance: none; }
.combo::after { content: ""; position: absolute; right: 3px; top: 10px; width: 4px; height: 2px; background: #666; clip-path: polygon(0 0, 100% 0, 50% 100%); }
.w-font { width: 144px; }
.w-size { width: 31px; border-left: 0; }
.w-size select, .m-size select { font-size: 12px; }
.w-num { width: 147px; }
.ib { width: 28px; height: 22px; flex: none; }
.ib.on { background: #c6c6c6; }
.sb { width: 27px; height: 22px; flex: none; }
.bold { font-weight: 700; font-size: 14px; }
.ital { font-family: "Liberation Serif", serif; font-style: italic; font-weight: 700; font-size: 16px; }
.under { font-size: 13px; font-weight: 600; }
.under span { border-bottom: 1px solid #888; line-height: 13px; }
.pct { font-size: 14px; }
.lbl { gap: 3px; justify-content: flex-start; height: 23px; }
.lbl .ar { margin-left: 6px; }
.tail { margin-left: auto; width: 99px; }

.big { display: flex; flex-direction: column; justify-content: flex-start; padding-top: 8px; width: 44px; }
.big > .ar { margin-top: 6px; }
.bigic { display: flex; align-items: center; justify-content: center; height: 32px; }
.cap { line-height: 14px; padding-top: 2px; }
.cap.line { width: 40px; border-top: 1px solid #e2e2e2; padding-top: 1px; }
.cap.two { display: flex; align-items: center; gap: 4px; padding: 0; }
.off { color: #b0b0b0; }
.off .ar { background: #c4c4c4; }
.stack { display: flex; flex-direction: column; }
.clipstack { padding-top: 5px; }
.clipstack .lbl { height: 24px; gap: 2px; }
.clipstack .lbl .ar { margin-left: 6px; }
.g-clip .cols { padding-left: 6px; }
.g-clip .big { margin-right: 5px; }
.g-style .cols { padding-left: 6px; }
.g-style .big { width: 52px; }
.g-style .wide { width: 60px; }
.editstack { padding-top: 3px; width: 80px; }
.g-edit .cols { padding-left: 14px; }
.g-edit .big { width: 58px; }
.editstack .ar { margin-left: 3px; }
.collapse { margin-left: auto; align-self: flex-end; height: 16px; }

/* formula bar */
.fbar { display: flex; align-items: center; height: 39px; flex: none; }
.namebox { display: flex; width: 92px; height: 21px; margin-left: 1px; background: #fff; border: 1px solid #dedede; }
.namebox input { flex: 1; min-width: 0; padding-left: 1px; font-size: 12px; }
.namebox button { width: 16px; }
.grip { width: 2px; height: 10px; background: repeating-linear-gradient(#aaa 0 2px, transparent 2px 4px); }
.fbar .grip { margin: 0 14px 0 12px; }
.fctl { display: flex; width: 99px; height: 21px; background: #fff; }
.fctl button { flex: 1; }
.fx { font-family: "Liberation Serif", serif; font-style: italic; font-size: 15px; }
.formula { display: flex; flex: 1; height: 21px; margin-left: 3px; background: #fff; }
.formula input { flex: 1; min-width: 0; padding-left: 9px; font-size: 14px; }

/* worksheet */
.sheet { display: flex; flex: 1; min-height: 0; }
.grid { display: flex; flex-direction: column; flex: 1; background: #fff; }
.grid thead, .grid tbody { display: contents; }
.grid tr { display: grid; grid-template-columns: 22px repeat(21, 1fr) 9px; flex: 1 1 0; min-height: 0; }
.grid tr.cols-head { flex: none; height: 18px; background: #e6e6e6; }
.grid tr.tall { flex: none; height: 44px; }
.grid tr.rest { flex: none; height: 4px; }
.grid th { padding: 0; font-weight: 400; border-right: 1px solid #d2d2d2; }
.cols-head th { font-size: 12px; line-height: 21px; height: 18px; border-bottom: 1px solid #cacaca; }
.cols-head th.sel { background: #d2d2d2; color: #217346; border-bottom: 2px solid #4f8f6e; }
.cols-head th:first-child { background: linear-gradient(135deg, transparent 50%, #b4b4b4 50%) 7px 2px / 14px 14px no-repeat; }
.grid tbody th { display: flex; align-items: flex-end; justify-content: center; padding-right: 4px; background: #e6e6e6; border-bottom: 1px solid #d2d2d2; font: 400 13px/16px "Liberation Sans", Arial, sans-serif; }
.grid tbody .tall th { background: #d2d2d2; color: #217346; border-right: 2px solid #217346; }
.grid td { padding: 0; border-right: 1px solid #eaeaea; border-bottom: 1px solid #eaeaea; }
.grid td.active { display: flex; align-items: center; margin: -1px 0 0 -1px; padding-left: 3px; border: 1px solid #217346; font-size: 14px; line-height: 18px; white-space: nowrap; }
.vscroll { display: flex; flex-direction: column; justify-content: space-between; width: 6px; padding: 2px 0 0 2px; background: #e6e6e6; }
.vscroll .up, .vscroll .down { height: 15px; background: #fff; border: 1px solid #d0d0d0; border-right: 0; }

/* sheet tabs */
.sheetbar { display: flex; align-items: center; flex: none; height: 20px; border-top: 1px solid #cdcdcd; border-bottom: 1px solid #d8d8d8; }
.nav { width: 18px; height: 18px; }
.nav:first-child { margin-left: 2px; }
.stab { width: 50px; height: 17px; margin-left: 18px; align-self: flex-start; background: #fff; color: #217346; font-size: 12px; border-bottom: 1px solid #6fa58a; }
.add { margin-left: 19px; }
.sheetbar .grip { margin-left: auto; margin-right: 10px; }
.hscroll { display: flex; width: 39%; height: 16px; padding: 0 5px 0 0; gap: 1px; }
.hscroll button { width: 14px; background: #fff; }
.thumb { flex: 1; background: #fff; }
.track { width: 24px; background: #dadada; }

/* status bar */
.status { display: flex; align-items: center; flex: none; height: 28px; background: #f3f3f3; }
.ready { flex: 1; padding-left: 1px; }
.view { width: 28px; height: 28px; }
.view.on { background: #c6c6c6; }
.zm { width: 14px; font-size: 14px; font-weight: 700; }
.zoom { width: 90px; height: 14px; appearance: none; background: linear-gradient(#b5b5b5, #b5b5b5) center / 100% 1px no-repeat; }
.zoom::-webkit-slider-thumb { appearance: none; width: 5px; height: 11px; background: #666; }
.pctv { width: 22px; margin-left: 5px; font-size: 12px; white-space: nowrap; }

/* task bar */
.taskbar { display: flex; align-items: stretch; flex: none; height: 34px; background: #020713; color: #fff; border-bottom: 2px solid #000; }
.start { width: 36px; }
.bars { width: 4px; margin: 3px 9px 0 10px; border: solid #3a3f48; border-width: 0 1px; }
.push { margin-left: auto; }
.task { width: 44px; background: #2d333d; }
.ime { display: flex; gap: 3px; height: 18px; align-items: center; }
.ime span { font: 10px "Liberation Mono", monospace; }
.tray { display: flex; align-items: center; gap: 8px; padding: 4px 13px 0 6px; }
.clock { display: flex; flex-direction: column; align-items: center; width: 86px; padding-top: 1px; font-size: 12px; line-height: 17px; white-space: nowrap; }
.clock small { font-size: 11px; }
.notify { width: 37px; margin: 2px 0 0 9px; }

/* floating toolbar */
.mini { position: absolute; left: 461px; top: 287px; padding: 1px 1px 1px 2px; background: #fff; border: 1px solid #e2e2e2; }
.mrow { display: flex; align-items: center; height: 22px; }
.mrow + .mrow { height: 19px; }
.mrow button { width: 19px; height: 20px; }
.mini .combo select { padding-left: 0; }
.m-font { width: 57px; }
.m-size { width: 42px; border-left: 0; }
.mini .bold { font-size: 13px; }
.mini .ital { font-size: 14px; }

/* context menu */
.menu { position: absolute; left: 461px; top: 346px; width: 155px; color: #555; background: #fff; border: 1px solid #e2e2e2; border-bottom: 0; }
.menu button { position: relative; justify-content: flex-start; width: 100%; height: 22px; }
.menu .off { color: #b0b0b0; }
.mi { display: flex; justify-content: center; align-items: center; width: 20px; margin-right: 3px; flex: none; }
.head { display: flex; align-items: center; height: 17px; }
.head .mi { margin: 0; }
.head b { flex: 1; padding-left: 3px; line-height: 17px; background: #ebebeb; }
.menu .pastebtn { height: 28px; padding-left: 27px; }
.menu hr { height: 1px; margin: 0 0 1px 26px; border: 0; background: #e9e9e9; }
.menu .sub .tri { margin: 0 8px 0 auto; }
.menu .hot { margin-top: 1px; background: #c5c5c5; color: #333; }
.mark { position: absolute; left: -7px; top: -6px; right: -13px; bottom: -8px; z-index: 1; border: 3px solid #fb3b3b; }
.cursor { position: absolute; right: -4px; top: 10px; }
```

FILE: script.js
```js
const grid = document.getElementById('grid');
const letters = 'ABCDEFGHIJKLMNOPQRSTU'.split('');

const head = document.createElement('thead');
head.innerHTML = '<tr class="cols-head"><th></th>' +
  letters.map(l => `<th${l === 'G' ? ' class="sel"' : ''}>${l}</th>`).join('') +
  '<th></th></tr>';
grid.append(head);

const body = document.createElement('tbody');
for (let r = 1; r <= 28; r++) {
  const tr = document.createElement('tr');
  if (r === 8) tr.className = 'tall';
  if (r === 28) tr.className = 'rest';
  let html = `<th>${r < 28 ? r : ''}</th>`;
  for (const l of letters) {
    html += r === 8 && l === 'G' ? '<td class="active">时间日期</td>' : '<td></td>';
  }
  tr.innerHTML = html + '<td></td>';
  body.append(tr);
}
grid.append(body);
```
